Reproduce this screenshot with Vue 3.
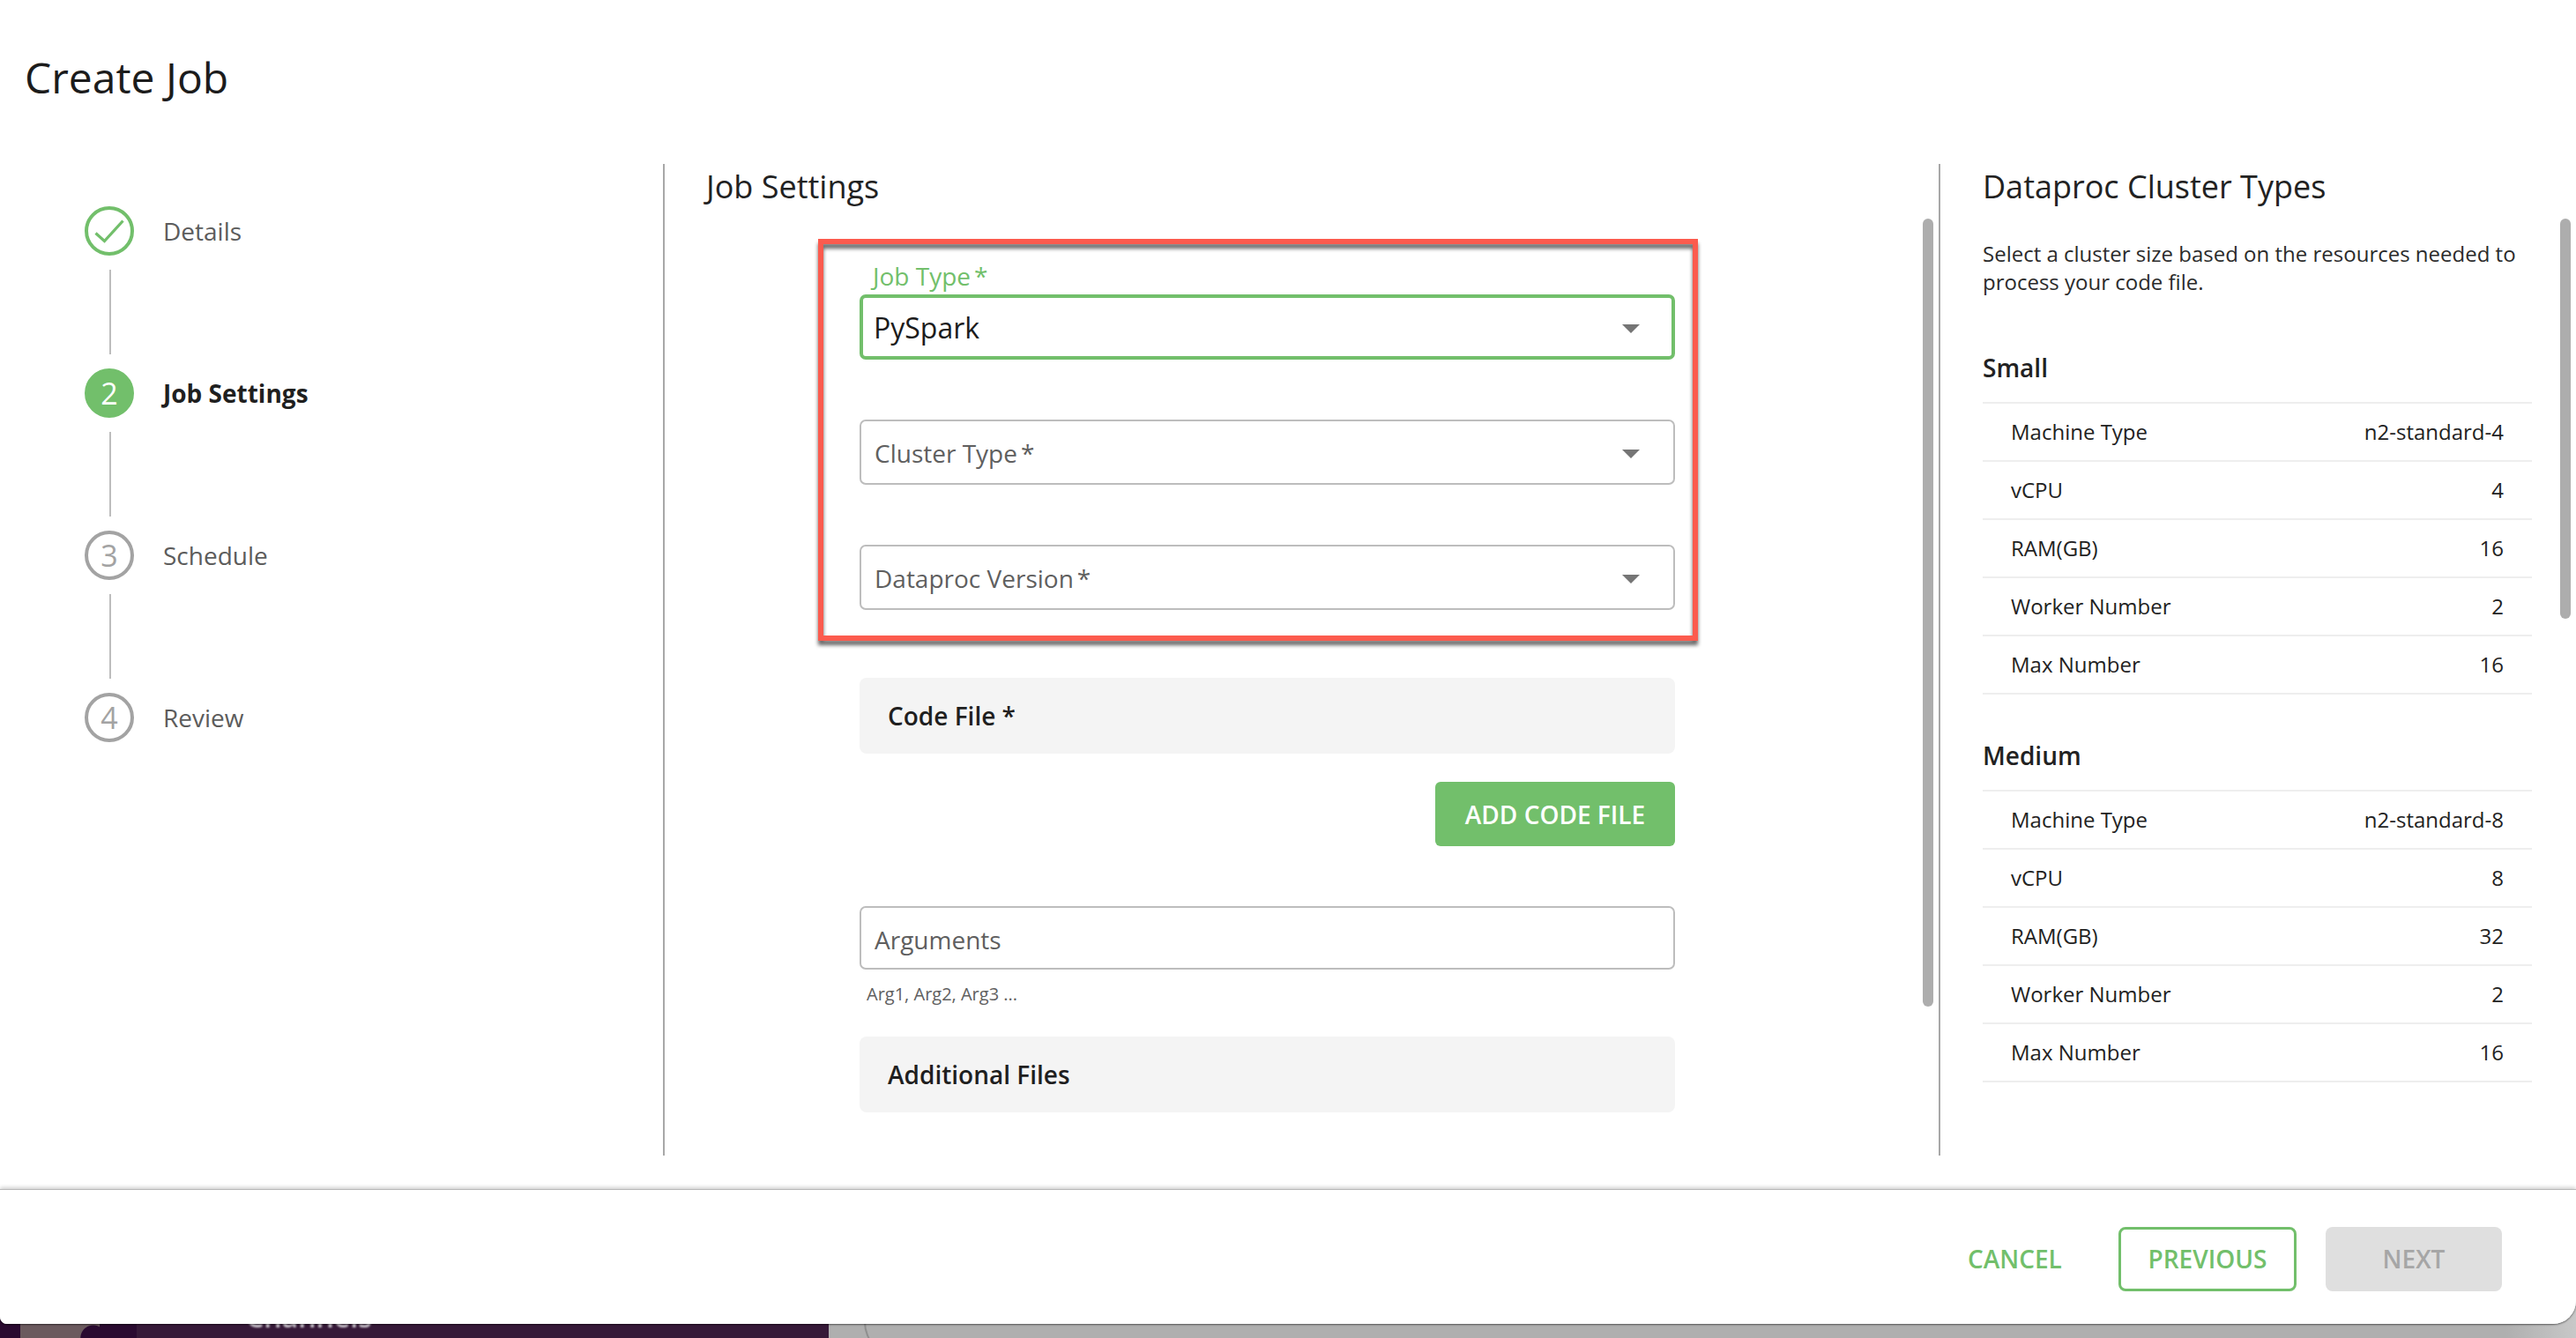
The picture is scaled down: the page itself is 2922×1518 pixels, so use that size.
<script setup>
const steps = [
  { n: '✓', label: 'Details', state: 'done' },
  { n: '2', label: 'Job Settings', state: 'active' },
  { n: '3', label: 'Schedule', state: 'todo' },
  { n: '4', label: 'Review', state: 'todo' }
]
const clusters = [
  { name: 'Small', rows: [['Machine Type', 'n2-standard-4'], ['vCPU', '4'], ['RAM(GB)', '16'], ['Worker Number', '2'], ['Max Number', '16']] },
  { name: 'Medium', rows: [['Machine Type', 'n2-standard-8'], ['vCPU', '8'], ['RAM(GB)', '32'], ['Worker Number', '2'], ['Max Number', '16']] }
]
</script>

<template>
  <div class="page">
    <div class="strip">
      <div class="strip-dark"><div class="strip-photo"></div></div>
      <div class="strip-purple"><span class="strip-text">Channels</span></div>
      <div class="strip-grey"><div class="strip-curve"></div></div>
    </div>
    <div class="dialog">
      <h1 class="title">Create Job</h1>
      <div class="body">
        <aside class="stepper">
          <template v-for="(s, i) in steps" :key="s.label">
            <div class="step" :class="s.state">
              <div class="circle">
                <svg v-if="s.state === 'done'" width="36" height="28" viewBox="0 0 36 28" fill="none">
                  <path d="M2.5 16.5 L12.5 25.5 L33.5 2.5" stroke="#72bf6b" stroke-width="3.2" />
                </svg>
                <span v-else>{{ s.n }}</span>
              </div>
              <span class="step-label">{{ s.label }}</span>
            </div>
            <div v-if="i < steps.length - 1" class="connector"></div>
          </template>
        </aside>

        <section class="middle">
          <h2 class="heading">Job Settings</h2>
          <div class="form">
            <div class="highlight"></div>
            <div class="field focus">
              <span class="float-label">Job Type<span class="req">*</span></span>
              <span class="value">PySpark</span>
              <span class="arrow"></span>
            </div>
            <div class="field">
              <span class="placeholder">Cluster Type<span class="req">*</span></span>
              <span class="arrow"></span>
            </div>
            <div class="field">
              <span class="placeholder">Dataproc Version<span class="req">*</span></span>
              <span class="arrow"></span>
            </div>
            <div class="panel code-panel">Code File *</div>
            <div class="add-row"><button class="add-btn">ADD CODE FILE</button></div>
            <div class="field args"><span class="placeholder">Arguments</span></div>
            <div class="helper">Arg1, Arg2, Arg3 ...</div>
            <div class="panel additional">Additional Files</div>
          </div>
          <div class="scrollbar"></div>
        </section>

        <section class="right">
          <h2 class="heading">Dataproc Cluster Types</h2>
          <p class="desc">Select a cluster size based on the resources needed to process your code file.</p>
          <div v-for="c in clusters" :key="c.name" class="cluster">
            <h3 class="cluster-name">{{ c.name }}</h3>
            <div v-for="r in c.rows" :key="r[0]" class="row">
              <span>{{ r[0] }}</span>
              <span>{{ r[1] }}</span>
            </div>
          </div>
          <div class="scrollbar"></div>
        </section>
      </div>
      <footer class="footer">
        <button class="btn cancel">CANCEL</button>
        <button class="btn previous">PREVIOUS</button>
        <button class="btn next">NEXT</button>
      </footer>
    </div>
  </div>
</template>

<style>
html, body { margin: 0; background: #fff; }
</style>

<style scoped>
.page {
  position: relative;
  width: 2922px;
  height: 1518px;
  overflow: hidden;
  display: flex;
  flex-direction: column;
  justify-content: flex-end;
  font-family: "Open Sans", "Noto Sans", sans-serif;
  background: #b0b0b0;
}
.strip { display: flex; height: 40px; }
.strip-dark { width: 155px; background: #2a0a30; padding-left: 23px; box-sizing: border-box; }
.strip-photo {
  width: 90px;
  height: 100%;
  background:
    radial-gradient(circle at 92% 100%, #2a0a30 0 14px, transparent 15px),
    #6b5a5e;
}
.strip-purple { width: 785px; background: #361938; position: relative; overflow: hidden; }
.strip-text {
  position: absolute;
  left: 124px;
  top: 1px;
  color: #d6d0d8;
  font-size: 32px;
  line-height: 30px;
  font-weight: 600;
  filter: blur(1px);
}
.strip-grey {
  flex: 1;
  background: linear-gradient(to right, #afafaf 96%, #c8c8c8 100%);
  position: relative;
  overflow: hidden;
}
.strip-curve {
  position: absolute;
  left: 40px;
  top: -20px;
  width: 400px;
  height: 82px;
  box-sizing: border-box;
  border-left: 2px solid #8f8f8f;
  border-bottom: 2px solid #8f8f8f;
  border-bottom-left-radius: 40px;
}

.dialog {
  position: absolute;
  left: 0;
  top: 0;
  width: 2922px;
  height: 1502px;
  background: #fff;
  border-radius: 0 0 26px 8px;
  box-shadow: 0 1px 2px rgba(0, 0, 0, .5);
  display: flex;
  flex-direction: column;
}
.title {
  margin: 0;
  height: 186px;
  box-sizing: border-box;
  padding: 62px 0 0 28px;
  font-size: 48px;
  line-height: 52px;
  font-weight: 400;
  color: #1c1c1c;
}
.body { display: flex; height: 1125px; }

.stepper {
  width: 752px;
  flex: none;
  padding: 48px 0 0 96px;
  box-sizing: border-box;
}
.step { display: flex; align-items: center; gap: 33px; height: 56px; }
.circle {
  width: 56px;
  height: 56px;
  box-sizing: border-box;
  border-radius: 50%;
  border: 4px solid #a3a3a3;
  color: #a3a3a3;
  display: flex;
  align-items: center;
  justify-content: center;
  font-size: 34px;
  flex: none;
}
.done .circle { border-color: #72bf6b; }
.active .circle { border-color: #72bf6b; background: #72bf6b; color: #fff; }
.step-label { font-size: 28px; color: #5c5c5c; }
.active .step-label { font-weight: 700; color: #1f1f1f; }
.connector { width: 2px; height: 96px; margin: 16px 0 16px 28px; background: #bdbdbd; }

.middle, .right {
  position: relative;
  border-left: 2px solid #a8a8a8;
  box-sizing: border-box;
}
.middle { width: 1447px; flex: none; padding-left: 47px; }
.right { flex: 1; padding-left: 48px; }
.heading {
  margin: 0;
  height: 52px;
  font-size: 36px;
  line-height: 52px;
  font-weight: 400;
  color: #222;
}
.form { position: relative; width: 925px; margin: 96px 0 0 174px; }
.highlight {
  position: absolute;
  left: -47px;
  top: -63px;
  width: 998px;
  height: 456px;
  box-sizing: border-box;
  border: 6px solid #fc5b4e;
  filter: drop-shadow(0 5px 2px rgba(0, 0, 0, .6));
  pointer-events: none;
}
.field {
  position: relative;
  height: 74px;
  margin-bottom: 68px;
  box-sizing: border-box;
  border: 2px solid #bdbdbd;
  border-radius: 7px;
  display: flex;
  align-items: center;
  padding: 2px 0 0 15px;
  font-size: 28px;
}
.field.focus { border: 4px solid #72bf6b; padding-left: 12px; padding-top: 0; }
.float-label {
  position: absolute;
  left: 11px;
  top: -42px;
  font-size: 28px;
  line-height: 34px;
  color: #72bf6b;
}
.req { margin-left: 4px; }
.value { font-size: 32px; color: #1c1c1c; }
.placeholder { color: #5f5f5f; }
.arrow {
  position: absolute;
  left: 863px;
  top: 32px;
  width: 0;
  height: 0;
  border-left: 10px solid transparent;
  border-right: 10px solid transparent;
  border-top: 10px solid #757575;
}
.field.focus .arrow { left: 861px; top: 30px; }
.panel {
  height: 86px;
  box-sizing: border-box;
  background: #f4f4f4;
  border-radius: 8px;
  padding-left: 32px;
  display: flex;
  align-items: center;
  font-size: 28px;
  font-weight: 600;
  color: #1f1f1f;
}
.code-panel { margin-top: 77px; }
.add-row { display: flex; justify-content: flex-end; margin-top: 32px; }
.add-btn {
  width: 272px;
  height: 73px;
  border: 0;
  border-radius: 6px;
  background: #72bf6b;
  color: #fff;
  font: 600 28px "Open Sans", sans-serif;
  padding: 0;
}
.field.args { margin: 68px 0 0; height: 72px; padding-top: 3px; }
.helper { margin: 14px 0 0 8px; font-size: 20px; line-height: 28px; color: #5f5f5f; }
.additional { margin-top: 34px; }
.scrollbar {
  position: absolute;
  top: 62px;
  width: 12px;
  border-radius: 6px;
  background: #adadad;
}
.middle .scrollbar { left: 1427px; height: 894px; }
.right .scrollbar { right: 6px; height: 454px; }

.desc {
  margin: 34px 0 0;
  width: 640px;
  font-size: 24px;
  line-height: 32px;
  color: #2b2b2b;
}
.cluster { width: 623px; }
.cluster-name {
  margin: 0;
  height: 40px;
  font-size: 28px;
  line-height: 40px;
  font-weight: 600;
  color: #222;
}
.desc + .cluster { margin-top: 61px; }
.cluster + .cluster { margin-top: 49px; }
.row {
  height: 66px;
  box-sizing: border-box;
  border-top: 2px solid #eeeeee;
  display: flex;
  justify-content: space-between;
  align-items: center;
  padding: 0 32px 2px;
  font-size: 24px;
  color: #222;
}
.cluster-name + .row { margin-top: 19px; }
.row:last-child { border-bottom: 2px solid #eeeeee; height: 68px; }

.footer {
  flex: none;
  margin-top: 38px;
  height: 153px;
  box-sizing: border-box;
  border-top: 1px solid #b8b8b8;
  box-shadow: 0 -2px 4px rgba(0, 0, 0, .18);
  display: flex;
  align-items: center;
  justify-content: flex-end;
  gap: 33px;
  padding: 4px 84px 0 0;
  border-radius: 0 0 26px 8px;
  background: #fff;
}
.btn {
  width: 202px;
  height: 73px;
  box-sizing: border-box;
  border-radius: 8px;
  font: 600 28px "Open Sans", sans-serif;
  padding: 0;
  background: #fff;
  border: 0;
}
.cancel { width: 105px; color: #72bf6b; margin-right: 33px; }
.previous { border: 3px solid #72bf6b; color: #72bf6b; }
.next { width: 200px; background: #dfdfdf; color: #a6a6a6; }
</style>
